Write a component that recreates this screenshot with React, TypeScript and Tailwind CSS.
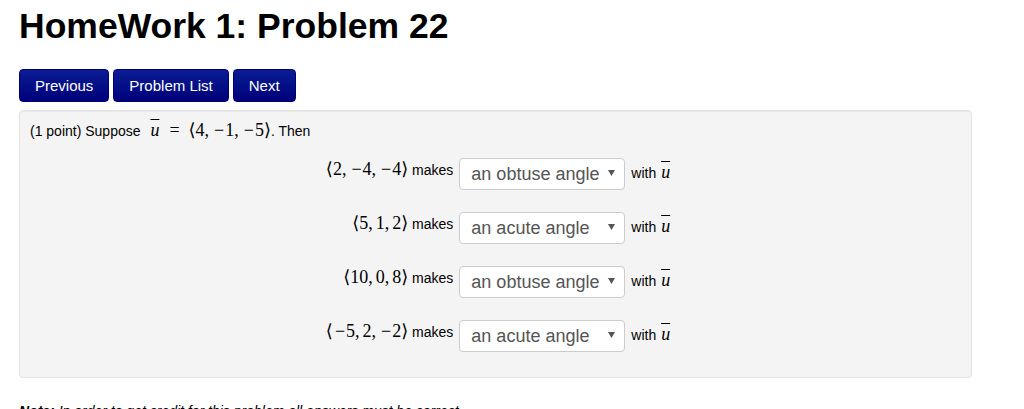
import React from 'react';

const serif = "font-['Liberation_Serif','DejaVu_Serif',serif]";

const Vec = ({ parts }: { parts: string[] }) => (
  <span className={`${serif} text-[18px] leading-none whitespace-nowrap`}>
    ⟨
    {parts.map((p, i) => (
      <React.Fragment key={i}>
        {i > 0 && <span className="mr-[3px]">,</span>}
        {p.startsWith('-') ? (
          <>
            <span className="ml-[2px] mr-[1px]">−</span>
            {p.slice(1)}
          </>
        ) : (
          p
        )}
      </React.Fragment>
    ))}
    ⟩
  </span>
);

const UBar = ({ className = '' }: { className?: string }) => (
  <span className={`${serif} text-[18px] leading-none italic overline px-[1px] ${className}`}>u</span>
);

const rows = [
  { vec: ['2', '-4', '-4'], answer: 'an obtuse angle' },
  { vec: ['5', '1', '2'], answer: 'an acute angle' },
  { vec: ['10', '0', '8'], answer: 'an obtuse angle' },
  { vec: ['-5', '2', '-2'], answer: 'an acute angle' },
];

const NavButton = ({ label }: { label: string }) => (
  <button className="h-[33px] px-[15px] rounded-[4px] border border-[#000070] bg-gradient-to-b from-[#0c1c94] to-[#00007a] text-white text-[15px] leading-none flex items-center">
    {label}
  </button>
);

export default function App() {
  return (
    <div className="min-h-screen bg-white text-black font-['Liberation_Sans',Arial,sans-serif] pl-[19px] pt-[6px]">
      <h1 className="text-[35.5px] leading-[40px] font-bold">HomeWork 1: Problem 22</h1>

      {/* Navigation */}
      <div className="mt-[23px] flex gap-[4px]">
        <NavButton label="Previous" />
        <NavButton label="Problem List" />
        <NavButton label="Next" />
      </div>

      {/* Problem well */}
      <div className="mt-[8px] w-[953px] border border-[#e3e3e3] rounded-[4px] bg-[#f4f4f4] shadow-[inset_0_1px_1px_rgba(0,0,0,0.05)] px-[10px] pt-[10px] pb-[25px] text-[14px] leading-[20px]">
        <div>
          (1 point) Suppose <UBar className="ml-[5px]" />
          <span className={`${serif} text-[18px] leading-none mx-[9px]`}>=</span>
          <Vec parts={['4', '-1', '-5']} />. Then
        </div>

        <div className="mt-[17px] pl-[6px] grid grid-cols-[auto_auto_auto] justify-center gap-x-[6px] gap-y-[22px]">
          {rows.map((r, i) => (
            <React.Fragment key={i}>
              <div className="pt-[2px] text-right whitespace-nowrap">
                <Vec parts={r.vec} /> makes
              </div>
              <div className="w-[166px] h-[32px] border border-[#cccccc] rounded-[4px] bg-white flex items-center justify-between pl-[11px] pr-[9px] text-[18px] leading-[20px] text-[#555555]">
                <span>{r.answer}</span>
                <svg width="7" height="6" viewBox="0 0 7 6" className="mt-[-2px]">
                  <path d="M0 0h7L3.5 6z" fill="#555555" />
                </svg>
              </div>
              <div className="pt-[5px] whitespace-nowrap">
                with <UBar />
              </div>
            </React.Fragment>
          ))}
        </div>
      </div>

      <p className="mt-[23px] text-[14px] leading-[20px] italic">
        <b>Note:</b> In order to get credit for this problem all answers must be correct.
      </p>
    </div>
  );
}
